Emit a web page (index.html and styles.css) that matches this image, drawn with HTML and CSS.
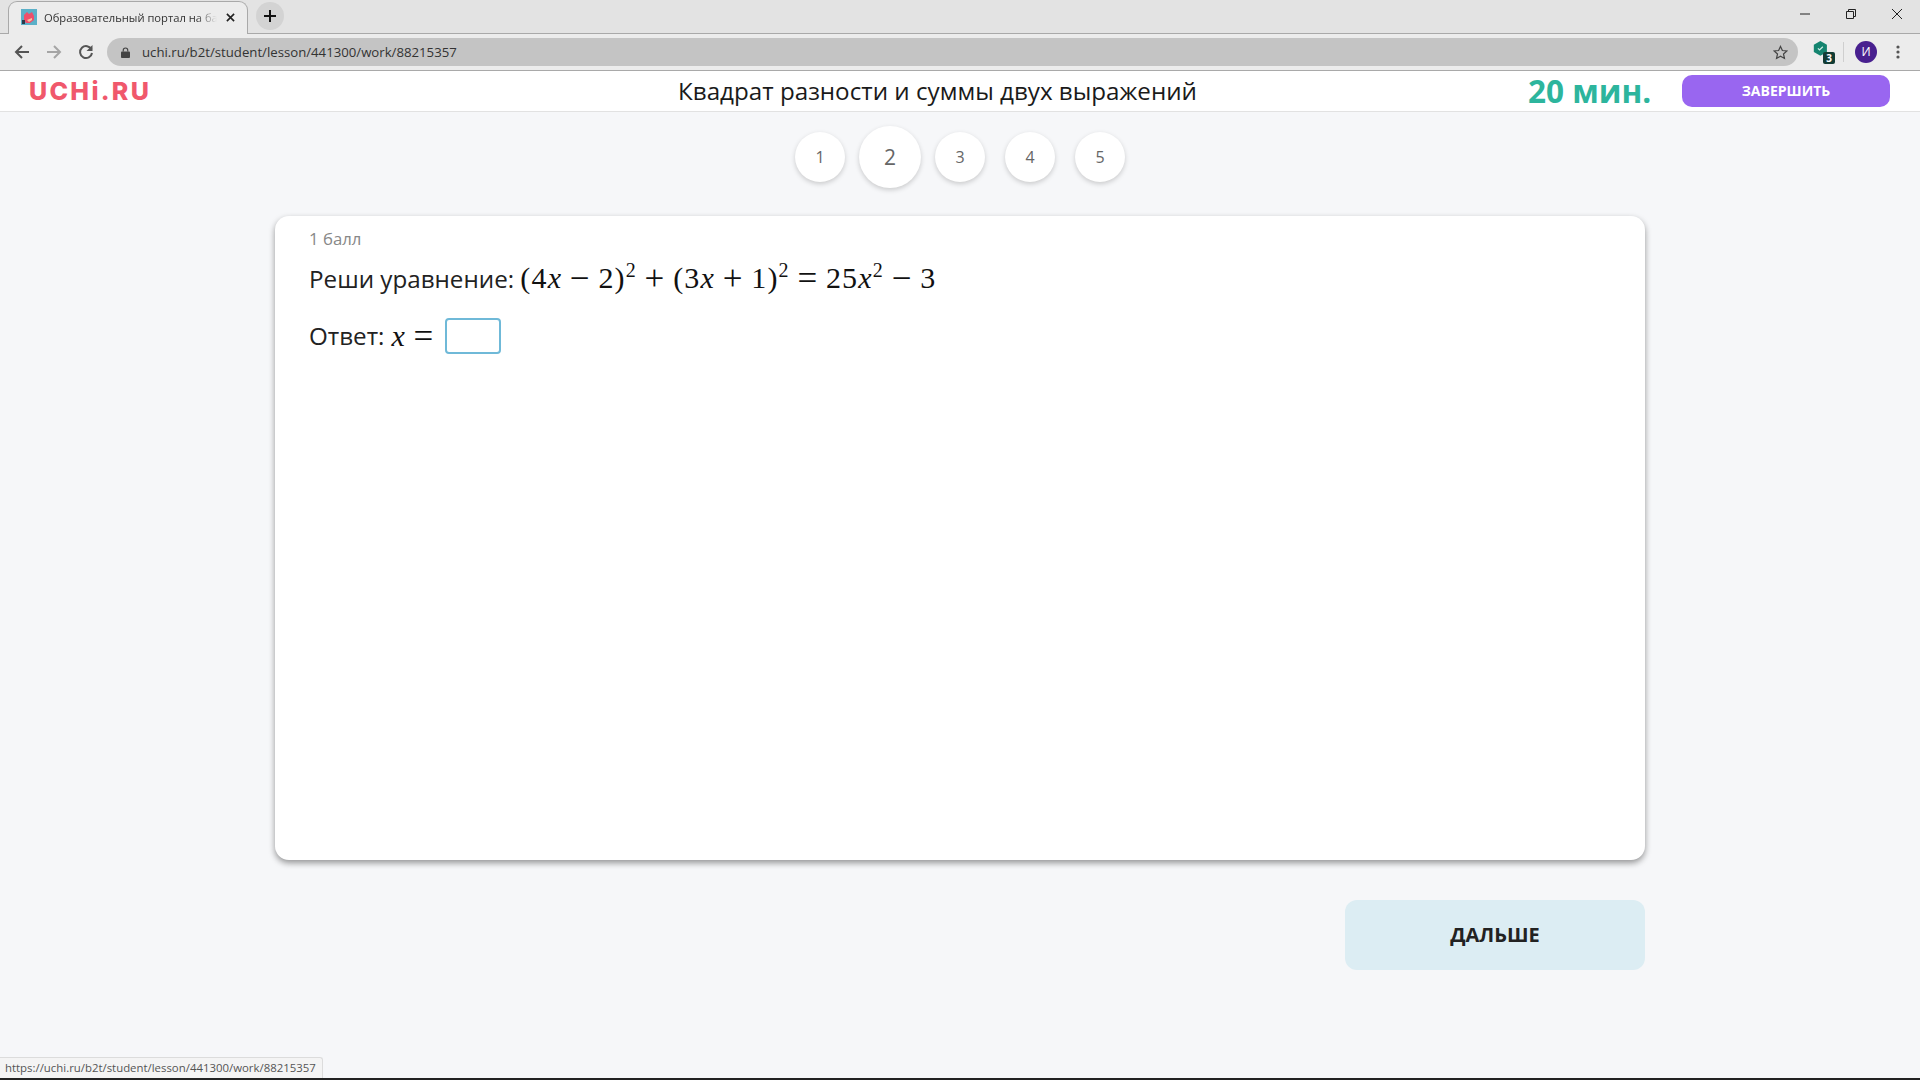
FILE: index.html
```html
<!DOCTYPE html>
<html>
  <head>
    <meta charset="utf-8">
    <title>Образовательный портал</title>
    <link rel="stylesheet" href="styles.css">
  </head>
  <body>
    <div class="tab-strip">
      <div class="tab">
        <svg class="favicon" viewBox="0 0 16 16">
          <rect width="16" height="16" fill="#5bb0c8"/>
          <path d="M3 6l3-3 2 2 3-2 2 4v4l-4 3H5l-2-3z" fill="#ee4f6b"/>
          <path d="M1 11h3v4H1z" fill="#2c3a4a"/>
          <path d="M6 11l5-2v2l-3 2z" fill="#f6c6a0"/>
        </svg>
        <span class="tab-title">Образовательный портал на ба</span>
        <svg class="tab-close" viewBox="0 0 10 10"><path d="M1 1l8 8M9 1l-8 8" stroke="#222" stroke-width="1.8"/></svg>
      </div>
      <div class="new-tab">
        <svg viewBox="0 0 12 12"><path d="M6 0v12M0 6h12" stroke="#111" stroke-width="2"/></svg>
      </div>
      <span class="flex"></span>
      <div class="win-btn">
        <svg viewBox="0 0 12 12"><path d="M1 6h10" stroke="#222" stroke-width="1"/></svg>
      </div>
      <div class="win-btn">
        <svg viewBox="0 0 12 12"><path d="M1.500 3.500h7v7h-7zM3.500 3.500v-2h7v7h-2" fill="none" stroke="#222" stroke-width="1"/></svg>
      </div>
      <div class="win-btn">
        <svg viewBox="0 0 12 12"><path d="M1 1l10 10M11 1L1 11" stroke="#222" stroke-width="1"/></svg>
      </div>
    </div>

    <div class="toolbar">
      <svg class="nav-icon" viewBox="0 0 16 16"><path d="M15 8H2M8 2L2 8l6 6" fill="none" stroke="#555" stroke-width="2"/></svg>
      <svg class="nav-icon" viewBox="0 0 16 16"><path d="M1 8h13M8 2l6 6-6 6" fill="none" stroke="#a5a5a5" stroke-width="2"/></svg>
      <svg class="nav-icon" viewBox="0 0 16 16"><path d="M13.500 5.500A6 6 0 1 0 14 9" fill="none" stroke="#555" stroke-width="2"/><path d="M14.500 1v6h-6z" fill="#555"/></svg>
      <div class="omnibox">
        <svg class="lock" viewBox="0 0 10 12"><path d="M2.500 5V3.500a2.500 2.500 0 0 1 5 0V5" fill="none" stroke="#444" stroke-width="1.300"/><rect y="5" width="10" height="7" rx="1" fill="#444"/></svg>
        <span class="url">uchi.ru/b2t/student/lesson/441300/work/88215357</span>
        <span class="flex"></span>
        <svg class="star" viewBox="0 0 16 16"><path d="M8 1.500l2 4.400 4.800.5-3.600 3.200 1 4.700L8 11.900l-4.200 2.400 1-4.700L1.200 6.400 6 5.900z" fill="none" stroke="#444" stroke-width="1.300"/></svg>
      </div>
      <div class="ext">
        <svg viewBox="0 0 22 24">
          <path d="M9 1l8 4.500v9L9 19l-8-4.500v-9z" fill="#14846f"/>
          <path d="M6 10l2 2 4-4" fill="none" stroke="#cfeee6" stroke-width="1.500"/>
        </svg>
        <span class="ext-badge">3</span>
      </div>
      <span class="tool-sep"></span>
      <span class="avatar">И</span>
      <svg class="menu-dots" viewBox="0 0 4 14"><circle cx="2" cy="2" r="1.600" fill="#555"/><circle cx="2" cy="7" r="1.600" fill="#555"/><circle cx="2" cy="12" r="1.600" fill="#555"/></svg>
    </div>

    <header class="page-header">
      <div class="logo">UCHi.RU</div>
      <h1 class="lesson-title">Квадрат разности и суммы двух выражений</h1>
      <div class="timer">20 мин.</div>
      <button class="finish-btn">ЗАВЕРШИТЬ</button>
    </header>

    <main class="content">
      <nav class="steps">
        <a class="step">1</a>
        <a class="step active">2</a>
        <a class="step">3</a>
        <a class="step">4</a>
        <a class="step">5</a>
      </nav>

      <section class="card">
        <div class="points">1 балл</div>
        <p class="task">Реши уравнение: <span class="math">(4<i>x</i><span class="op">−</span>2)<sup>2</sup><span class="op">+</span>(3<i>x</i><span class="op">+</span>1)<sup>2</sup><span class="op">=</span>25<i>x</i><sup>2</sup><span class="op">−</span>3</span></p>
        <div class="answer">
          <span>Ответ:</span>
          <span class="math"><i>x</i><span class="op">=</span></span>
          <span class="answer-input"></span>
        </div>
      </section>

      <div class="actions">
        <button class="next-btn">ДАЛЬШЕ</button>
      </div>
    </main>

    <div class="status-bubble">https://uchi.ru/b2t/student/lesson/441300/work/88215357</div>
    <div class="taskbar-edge"></div>
  </body>
</html>
```

FILE: styles.css
```css
html, body {
  height: 100%;
}
body {
  margin: 0;
  display: flex;
  flex-direction: column;
  position: relative;
  overflow: hidden;
  background: #f6f7f9;
  font-family: "Open Sans", "Noto Sans", sans-serif;
  color: #1c1c1c;
}
.flex {
  flex: 1;
}

/* browser chrome */
.tab-strip {
  height: 34px;
  flex: none;
  display: flex;
  align-items: flex-end;
  box-sizing: border-box;
  padding-left: 8px;
  background: #e3e3e3;
  border-bottom: 1px solid #a9a9a9;
}
.tab {
  width: 240px;
  height: 33px;
  margin-bottom: -1px;
  box-sizing: border-box;
  display: flex;
  align-items: center;
  padding: 0 12px 2px;
  background: #ececec;
  border: 1px solid #a9a9a9;
  border-bottom: none;
  border-radius: 9px 9px 0 0;
}
.favicon {
  width: 16px;
  height: 16px;
  flex: none;
}
.tab-title {
  flex: 1;
  margin-left: 7px;
  overflow: hidden;
  white-space: nowrap;
  font-size: 11.200px;
  color: #333;
  -webkit-mask-image: linear-gradient(to right, #000 88%, transparent);
  mask-image: linear-gradient(to right, #000 88%, transparent);
}
.tab-close {
  width: 9px;
  height: 9px;
  margin-left: 9px;
  flex: none;
}
.new-tab {
  width: 28px;
  height: 28px;
  margin: 0 0 3px 8px;
  display: flex;
  align-items: center;
  justify-content: center;
  border-radius: 50%;
  background: #d3d3d3;
}
.new-tab svg {
  width: 12px;
  height: 12px;
}
.win-btn {
  width: 46px;
  height: 28px;
  align-self: flex-start;
  display: flex;
  align-items: center;
  justify-content: center;
}
.win-btn svg {
  width: 12px;
  height: 12px;
}
.toolbar {
  height: 37px;
  flex: none;
  display: flex;
  align-items: center;
  box-sizing: border-box;
  padding: 0 12px 0 14px;
  background: #ececec;
  border-bottom: 1px solid #a9a9a9;
}
.nav-icon {
  width: 16px;
  height: 16px;
  margin-right: 16px;
  flex: none;
}
.omnibox {
  width: 1691px;
  height: 28px;
  margin-left: -3px;
  flex: none;
  display: flex;
  align-items: center;
  box-sizing: border-box;
  padding: 0 10px 0 14px;
  border-radius: 14px;
  background: #c4c4c4;
}
.lock {
  width: 9px;
  height: 11px;
}
.url {
  margin-left: 12px;
  font-size: 13.200px;
  color: #333;
}
.star {
  width: 15px;
  height: 15px;
}
.ext {
  position: relative;
  width: 22px;
  height: 24px;
  margin-left: 15px;
}
.ext svg {
  width: 18px;
  height: 20px;
}
.ext-badge {
  position: absolute;
  right: 0;
  bottom: 0;
  width: 12px;
  height: 12px;
  border-radius: 2px;
  background: #123c34;
  color: #fff;
  font-size: 10px;
  font-weight: 700;
  line-height: 12px;
  text-align: center;
}
.tool-sep {
  width: 1px;
  height: 20px;
  margin: 0 11px 0 8px;
  background: #cfcfcf;
}
.avatar {
  width: 22px;
  height: 22px;
  border-radius: 50%;
  background: #48208f;
  color: #fff;
  font-size: 12px;
  line-height: 22px;
  text-align: center;
}
.menu-dots {
  width: 4px;
  height: 14px;
  margin-left: 19px;
}

/* lesson header */
.page-header {
  height: 41px;
  flex: none;
  display: flex;
  align-items: center;
  box-sizing: border-box;
  padding: 0 30px 1px 29px;
  background: #fff;
  border-bottom: 1px solid #e2e2e2;
}
.logo {
  width: 649px;
  font-family: "Inter", sans-serif;
  font-size: 25px;
  font-weight: 800;
  letter-spacing: 2.300px;
  color: #f0586c;
}
.lesson-title {
  width: 850px;
  margin: 0;
  font-size: 24.200px;
  font-weight: 400;
  color: #1a1a1a;
}
.timer {
  width: 154px;
  font-size: 31.500px;
  font-weight: 700;
  color: #2db59d;
}
.finish-btn {
  width: 208px;
  height: 32px;
  padding: 0;
  border: none;
  border-radius: 10px;
  background: #9966f0;
  color: #fff;
  font-family: inherit;
  font-size: 14px;
  font-weight: 700;
}

/* main column */
.content {
  flex: 1;
  display: flex;
  flex-direction: column;
  align-items: center;
}
.steps {
  height: 90px;
  margin-bottom: 14px;
  display: flex;
  align-items: center;
  gap: 20px;
}
.step {
  width: 50px;
  height: 50px;
  border-radius: 50%;
  background: #fff;
  box-shadow: 0 2px 5px rgba(0, 0, 0, 0.18);
  display: flex;
  align-items: center;
  justify-content: center;
  font-size: 16px;
  color: #666;
}
.step.active {
  width: 62px;
  height: 62px;
  margin: 0 -6px;
  font-size: 21px;
}
.card {
  width: 1370px;
  height: 644px;
  box-sizing: border-box;
  padding: 12px 34px;
  border-radius: 14px;
  background: #fff;
  box-shadow: 0 3px 6px rgba(0, 0, 0, 0.4);
}
.points {
  font-size: 16.800px;
  line-height: 22px;
  color: #888;
}
.task {
  margin: 8px 0 0;
  font-size: 24.200px;
  line-height: 40px;
  color: #222;
}
.math {
  font-family: "Liberation Serif", serif;
  font-size: 30px;
  letter-spacing: 1.200px;
  color: #111;
}
.math sup {
  font-size: 20px;
  line-height: 0;
}
.op {
  margin: 0 7.600px;
  font-size: 35px;
  line-height: 0;
  vertical-align: -2px;
}
.answer {
  margin-top: 19px;
  display: flex;
  align-items: center;
  font-size: 24.200px;
  line-height: 36px;
  color: #222;
}
.answer .math {
  margin-left: 7px;
}
.answer .op {
  margin-right: 10.500px;
}
.answer-input {
  width: 56px;
  height: 36px;
  box-sizing: border-box;
  border: 2px solid #6fb9d8;
  border-radius: 4px;
  background: #fff;
}
.actions {
  width: 1370px;
  margin-top: 40px;
  display: flex;
  justify-content: flex-end;
}
.next-btn {
  width: 300px;
  height: 70px;
  padding: 0 0 2px;
  border: none;
  border-radius: 12px;
  background: #dcedf3;
  color: #222;
  font-family: inherit;
  font-size: 20px;
  font-weight: 700;
}

/* bottom of the window */
.status-bubble {
  position: absolute;
  left: 0;
  bottom: 2px;
  height: 21px;
  box-sizing: border-box;
  padding: 0 6px 0 5px;
  border: 1px solid #dcdcdc;
  border-left: none;
  border-bottom: none;
  border-radius: 0 3px 0 0;
  background: #f4f4f4;
  font-size: 11.400px;
  line-height: 20px;
  color: #555;
}
.taskbar-edge {
  height: 2px;
  flex: none;
  background: #222;
}
```
